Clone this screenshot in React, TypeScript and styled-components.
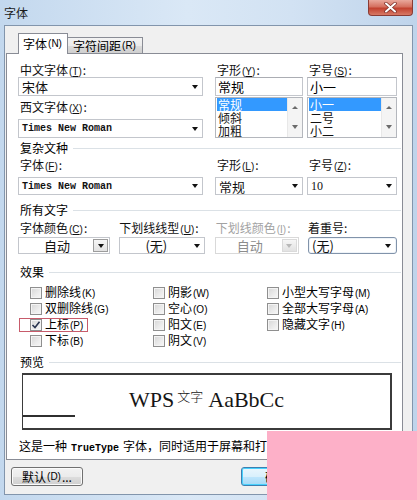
import React from "react";
import styled, { createGlobalStyle, css } from "styled-components";

const GlobalStyle = createGlobalStyle`
  html, body {
    margin: 0;
    padding: 0;
    background: #ffffff;
  }
  body {
    font-family: "Noto Sans CJK SC", "Liberation Sans", sans-serif;
    color: #000;
  }
`;

const Window = styled.div`
  position: relative;
  width: 417px;
  height: 500px;
  box-sizing: border-box;
  padding: 0 4px 5px 4px;
  display: flex;
  flex-direction: column;
  overflow: hidden;
  background: linear-gradient(90deg, #c3d8ee 0%, #dae8f6 45%, #d2e2f3 70%, #bfd4eb 100%);
`;

const TitleBar = styled.div`
  height: 25px;
  flex: none;
  display: flex;
  align-items: flex-start;
  justify-content: space-between;
`;

const Title = styled.span`
  font-size: 12px;
  line-height: 25px;
  color: #1a1a1a;
`;

const CloseButton = styled.div`
  width: 45px;
  height: 16px;
  box-sizing: border-box;
  border: 1px solid #8a3b34;
  border-top: none;
  border-radius: 0 0 4px 4px;
  background: linear-gradient(180deg, #e9a89c 0%, #d5705f 45%, #c2412f 55%, #d77a66 100%);
  display: flex;
  align-items: center;
  justify-content: center;
`;

const Body = styled.div`
  flex: 1;
  background: #f0f0f0;
  border: 1px solid #8295ac;
  display: flex;
  flex-direction: column;
  padding: 7px 9px 0 1px;
`;

const TabRow = styled.div`
  position: relative;
  z-index: 1;
  height: 20px;
  display: flex;
  align-items: flex-end;
  padding-left: 12px;
`;

const Tab = styled.div<{ $active?: boolean; $w: number }>`
  box-sizing: border-box;
  width: ${(p) => p.$w}px;
  font-size: 12px;
  line-height: 14px;
  display: flex;
  align-items: center;
  justify-content: center;
  border: 1px solid #898c95;
  border-bottom: none;
  white-space: nowrap;
  ${(p) =>
    p.$active
      ? css`
          height: 21px;
          margin-bottom: -1px;
          background: #ffffff;
          padding-bottom: 1px;
        `
      : css`
          height: 16px;
          border-left: none;
          background: linear-gradient(180deg, #f3f3f3 0%, #ebebeb 50%, #dddddd 51%, #cfcfcf 100%);
        `}
`;

const Panel = styled.div`
  height: 407px;
  box-sizing: border-box;
  border: 1px solid #898c95;
  background: #ffffff;
  padding: 9px 5px 0 11px;
  display: flex;
  flex-direction: column;
`;

const Row = styled.div<{ $mt?: number }>`
  display: flex;
  gap: 12px;
  margin-top: ${(p) => p.$mt ?? 0}px;
`;

const PairGrid = styled.div`
  display: grid;
  grid-template-columns: 88px 90px;
  column-gap: 4px;
`;

const Field = styled.div<{ $w?: number }>`
  display: flex;
  flex-direction: column;
  width: ${(p) => (p.$w ? `${p.$w}px` : "auto")};
`;

const FieldRow = styled.div<{ $mt?: number }>`
  display: flex;
  justify-content: space-between;
  margin-top: ${(p) => p.$mt ?? 0}px;
`;

const Label = styled.div<{ $disabled?: boolean; $mt?: number; $indent?: number }>`
  font-size: 12px;
  line-height: 14px;
  height: 14px;
  white-space: nowrap;
  margin-top: ${(p) => p.$mt ?? 0}px;
  padding-left: ${(p) => p.$indent ?? 2}px;
  color: ${(p) => (p.$disabled ? "#a2a2a2" : "#111111")};
`;

const Key = styled.span`
  font-family: "Liberation Sans", sans-serif;
  font-size: 10px;
  margin: 0 1px;
`;

const Combo = styled.div<{ $h: number; $mt?: number; $disabled?: boolean; $rounded?: boolean }>`
  box-sizing: border-box;
  height: ${(p) => p.$h}px;
  margin-top: ${(p) => p.$mt ?? 0}px;
  display: flex;
  align-items: stretch;
  background: #ffffff;
  border: 1px solid ${(p) => (p.$disabled ? "#d9d9d9" : "#c3c6cc")};
  ${(p) =>
    p.$rounded &&
    css`
      border-color: #8193aa;
      border-radius: 3px;
      box-shadow: inset 0 0 0 1px #eef3f8;
    `}
`;

const ComboText = styled.div<{ $center?: boolean; $mono?: boolean; $serif?: boolean; $disabled?: boolean }>`
  flex: 1;
  display: flex;
  align-items: center;
  justify-content: ${(p) => (p.$center ? "center" : "flex-start")};
  padding-left: 3px;
  white-space: nowrap;
  line-height: 15px;
  color: ${(p) => (p.$disabled ? "#8c8c8c" : "#111111")};
  ${(p) =>
    p.$mono
      ? css`
          font-family: "Liberation Mono", monospace;
          font-size: 10px;
          font-weight: bold;
        `
      : p.$serif
      ? css`
          font-family: "Liberation Serif", serif;
          font-size: 12px;
        `
      : css`
          font-size: 13px;
        `}
`;

const ArrowCell = styled.div<{ $boxed?: boolean; $disabled?: boolean }>`
  width: 15px;
  box-sizing: border-box;
  display: flex;
  align-items: center;
  justify-content: center;
  ${(p) =>
    p.$boxed &&
    css`
      border: 1px solid ${p.$disabled ? "#dadada" : "#9c9c9c"};
      background: linear-gradient(180deg, #f6f6f6 0%, #e2e2e2 100%);
      margin: 1px;
    `}
`;

const Arrow = styled.span<{ $up?: boolean; $color?: string; $w?: number }>`
  width: 0;
  height: 0;
  border-left: ${(p) => (p.$w ?? 7) / 2}px solid transparent;
  border-right: ${(p) => (p.$w ?? 7) / 2}px solid transparent;
  ${(p) =>
    p.$up
      ? css`
          border-bottom: 3px solid ${p.$color ?? "#111"};
        `
      : css`
          border-top: 4px solid ${p.$color ?? "#111"};
        `}
`;

const TextInput = styled.div`
  box-sizing: border-box;
  height: 19px;
  border: 1px solid #c3c6cc;
  border-top-color: #abadb3;
  font-size: 13px;
  line-height: 17px;
  padding-left: 2px;
  background: #fff;
`;

const ListBox = styled.div`
  box-sizing: border-box;
  height: 41px;
  margin-top: 1px;
  border: 1px solid #b4b7bd;
  display: flex;
  background: #ffffff;
`;

const ListItems = styled.div`
  flex: 1;
  padding: 0 0 0 1px;
  overflow: hidden;
`;

const ListItem = styled.div<{ $selected?: boolean }>`
  height: 13px;
  font-size: 12px;
  line-height: 13px;
  padding-left: 1px;
  background: ${(p) => (p.$selected ? "#3399ff" : "transparent")};
  color: ${(p) => (p.$selected ? "#ffffff" : "#111111")};
`;

const ScrollBar = styled.div`
  width: 15px;
  background: #f4f4f4;
  border-left: 1px solid #e8e8e8;
  display: flex;
  flex-direction: column;
  align-items: center;
  justify-content: space-between;
  padding: 8px 0 8px;
  box-sizing: border-box;
`;

const Heading = styled.div<{ $mt?: number }>`
  display: flex;
  align-items: center;
  gap: 5px;
  font-size: 12px;
  line-height: 14px;
  height: 14px;
  margin-top: ${(p) => p.$mt ?? 0}px;
  margin-right: -4px;
  padding-left: 2px;
  &::after {
    content: "";
    flex: 1;
    height: 1px;
    background: #dbe1e6;
  }
`;

const EffectsGrid = styled.div`
  margin-top: 6px;
  padding-left: 12px;
  display: grid;
  grid-template-columns: 123px 114px 1fr;
  grid-template-rows: repeat(4, 16px);
  grid-auto-flow: column;
`;

const CheckItem = styled.div<{ $marked?: boolean }>`
  position: relative;
  justify-self: start;
  display: flex;
  align-items: center;
  gap: 3px;
  font-size: 12px;
  line-height: 16px;
  white-space: nowrap;
  ${(p) =>
    p.$marked &&
    css`
      &::after {
        content: "";
        position: absolute;
        left: -11px;
        right: -4px;
        top: 1px;
        bottom: 1px;
        border: 1px solid #c75b6b;
      }
    `}
`;

const Box = styled.span`
  width: 12px;
  height: 12px;
  box-sizing: border-box;
  border: 1px solid #8f8f8f;
  background: linear-gradient(135deg, #d6d6d6 0%, #ececec 60%, #f7f7f7 100%);
  box-shadow: inset 0 0 0 1px #f4f4f4;
  display: flex;
  align-items: center;
  justify-content: center;
`;

const Preview = styled.div`
  margin: 4px 5px 0 4px;
  height: 57px;
  box-sizing: border-box;
  border: 1px solid #3b3b3b;
  border-top-width: 2px;
  border-right-width: 2px;
  border-bottom-width: 2px;
  background: #ffffff;
  display: flex;
  flex-direction: column;
`;

const PreviewText = styled.div`
  margin-top: 9px;
  font-family: "Liberation Serif", serif;
  font-size: 22px;
  line-height: 24px;
  text-align: center;
  color: #161616;
  white-space: nowrap;
`;

const Sup = styled.span`
  font-family: "Noto Sans CJK SC", sans-serif;
  font-size: 13px;
  font-weight: 300;
  vertical-align: 6px;
  margin: 0 5px 0 3px;
`;

const BaseLine = styled.div`
  width: 52px;
  height: 2px;
  background: #2f2f2f;
  margin-top: 3px;
`;

const Description = styled.div`
  margin-top: 9px;
  font-size: 12px;
  line-height: 14px;
  white-space: nowrap;
  padding-left: 1px;
`;

const Mono = styled.span`
  font-family: "Liberation Mono", monospace;
  font-size: 10px;
  font-weight: bold;
  margin: 0 4px;
`;

const Footer = styled.div`
  flex: 1;
  display: flex;
  align-items: center;
  gap: 8px;
  padding: 0 10px 1px 5px;
`;

const Button = styled.div<{ $primary?: boolean; $push?: boolean }>`
  width: 72px;
  height: 19px;
  box-sizing: border-box;
  border: 1px solid ${(p) => (p.$primary ? "#3c7fb1" : "#707070")};
  border-radius: 3px;
  font-size: 12px;
  line-height: 14px;
  display: flex;
  align-items: center;
  justify-content: center;
  margin-left: ${(p) => (p.$push ? "auto" : "0")};
  background: ${(p) =>
    p.$primary
      ? "linear-gradient(180deg, #eaf6fd 0%, #d9f0fc 50%, #bee6fd 51%, #a7d9f5 100%)"
      : "linear-gradient(180deg, #f2f2f2 0%, #ebebeb 50%, #dddddd 51%, #cfcfcf 100%)"};
  box-shadow: inset 0 0 0 1px ${(p) => (p.$primary ? "#48d1fd" : "#fbfbfb")};
`;

const Mask = styled.div`
  position: absolute;
  left: 267px;
  top: 431px;
  right: 0;
  bottom: 0;
  background: #fdb0c8;
`;

const Mn: React.FC<{ k: string }> = ({ k }) => (
  <Key>
    (<u>{k}</u>)
  </Key>
);

const CloseIcon = () => (
  <svg width="13" height="11" viewBox="0 0 13 11">
    <path d="M2 1.5 L11 9.5 M11 1.5 L2 9.5" stroke="#7a2d26" strokeWidth="3.4" strokeLinecap="round" />
    <path d="M2 1.5 L11 9.5 M11 1.5 L2 9.5" stroke="#ffffff" strokeWidth="2" strokeLinecap="round" />
  </svg>
);

const CheckMark = () => (
  <svg width="10" height="10" viewBox="0 0 10 10">
    <path d="M1.5 5 L4 7.5 L8.5 1.8" fill="none" stroke="#2a3550" strokeWidth="1.6" />
  </svg>
);

const Check: React.FC<{ label: string; k: string; checked?: boolean; marked?: boolean }> = ({
  label,
  k,
  checked,
  marked,
}) => (
  <CheckItem $marked={marked}>
    <Box>{checked && <CheckMark />}</Box>
    <span>
      {label}
      <Key>({k})</Key>
    </span>
  </CheckItem>
);

const effects = [
  { label: "删除线", k: "K" },
  { label: "双删除线", k: "G" },
  { label: "上标", k: "P", checked: true, marked: true },
  { label: "下标", k: "B" },
  { label: "阴影", k: "W" },
  { label: "空心", k: "O" },
  { label: "阳文", k: "E" },
  { label: "阴文", k: "V" },
  { label: "小型大写字母", k: "M" },
  { label: "全部大写字母", k: "A" },
  { label: "隐藏文字", k: "H" },
];

const Dropdown: React.FC<{ children: React.ReactNode }> = ({ children }) => (
  <>
    {children}
    <ArrowCell>
      <Arrow />
    </ArrowCell>
  </>
);

export default function App() {
  return (
    <>
      <GlobalStyle />
      <Window>
        <TitleBar>
          <Title>字体</Title>
          <CloseButton>
            <CloseIcon />
          </CloseButton>
        </TitleBar>
        <Body>
          <TabRow>
            <Tab $active $w={50}>
              字体<Key>(N)</Key>
            </Tab>
            <Tab $w={75}>
              字符间距<Key>(R)</Key>
            </Tab>
          </TabRow>
          <Panel>
            <Row>
              <Field $w={185}>
                <Label>
                  中文字体<Mn k="T" />:
                </Label>
                <Combo $h={19}>
                  <Dropdown>
                    <ComboText>宋体</ComboText>
                  </Dropdown>
                </Combo>
                <Label $mt={4}>
                  西文字体<Mn k="X" />:
                </Label>
                <Combo $h={19} $mt={5}>
                  <Dropdown>
                    <ComboText $mono>Times New Roman</ComboText>
                  </Dropdown>
                </Combo>
              </Field>
              <PairGrid>
                <Field>
                  <Label>
                    字形<Mn k="Y" />:
                  </Label>
                  <TextInput>常规</TextInput>
                  <ListBox>
                    <ListItems>
                      <ListItem $selected>常规</ListItem>
                      <ListItem>倾斜</ListItem>
                      <ListItem>加粗</ListItem>
                    </ListItems>
                    <ScrollBar>
                      <Arrow $up $w={6} $color="#6b6b6b" />
                      <Arrow $w={6} $color="#6b6b6b" />
                    </ScrollBar>
                  </ListBox>
                </Field>
                <Field>
                  <Label>
                    字号<Mn k="S" />:
                  </Label>
                  <TextInput>小一</TextInput>
                  <ListBox>
                    <ListItems>
                      <ListItem $selected>小一</ListItem>
                      <ListItem>二号</ListItem>
                      <ListItem>小二</ListItem>
                    </ListItems>
                    <ScrollBar>
                      <Arrow $up $w={6} $color="#6b6b6b" />
                      <Arrow $w={6} $color="#6b6b6b" />
                    </ScrollBar>
                  </ListBox>
                </Field>
              </PairGrid>
            </Row>

            <Heading $mt={3}>复杂文种</Heading>
            <Row $mt={3}>
              <Field $w={185}>
                <Label>
                  字体<Mn k="F" />:
                </Label>
                <Combo $h={18} $mt={5}>
                  <Dropdown>
                    <ComboText $mono>Times New Roman</ComboText>
                  </Dropdown>
                </Combo>
              </Field>
              <PairGrid>
                <Field>
                  <Label>
                    字形<Mn k="L" />:
                  </Label>
                  <Combo $h={18} $mt={5}>
                    <Dropdown>
                      <ComboText>常规</ComboText>
                    </Dropdown>
                  </Combo>
                </Field>
                <Field>
                  <Label>
                    字号<Mn k="Z" />:
                  </Label>
                  <Combo $h={18} $mt={5}>
                    <Dropdown>
                      <ComboText $serif>10</ComboText>
                    </Dropdown>
                  </Combo>
                </Field>
              </PairGrid>
            </Row>

            <Heading $mt={8}>所有文字</Heading>
            <FieldRow $mt={4}>
              <Field $w={92}>
                <Label>
                  字体颜色<Mn k="C" />:
                </Label>
                <Combo $h={17} $mt={2}>
                  <ComboText $center>自动</ComboText>
                  <ArrowCell $boxed>
                    <Arrow $w={6} />
                  </ArrowCell>
                </Combo>
              </Field>
              <Field $w={86}>
                <Label $indent={0}>
                  下划线线型<Mn k="U" />:
                </Label>
                <Combo $h={17} $mt={2}>
                  <Dropdown>
                    <ComboText $center>(无)</ComboText>
                  </Dropdown>
                </Combo>
              </Field>
              <Field $w={84}>
                <Label $disabled $indent={1}>
                  下划线颜色<Mn k="I" />:
                </Label>
                <Combo $h={17} $mt={2} $disabled>
                  <ComboText $center $disabled>
                    自动
                  </ComboText>
                  <ArrowCell $boxed $disabled>
                    <Arrow $w={6} $color="#b8b8b8" />
                  </ArrowCell>
                </Combo>
              </Field>
              <Field $w={89}>
                <Label $indent={0}>着重号:</Label>
                <Combo $h={17} $mt={2} $rounded>
                  <Dropdown>
                    <ComboText>(无)</ComboText>
                  </Dropdown>
                </Combo>
              </Field>
            </FieldRow>

            <Heading $mt={11}>效果</Heading>
            <EffectsGrid>
              {effects.map((e) => (
                <Check key={e.k} label={e.label} k={e.k} checked={e.checked} marked={e.marked} />
              ))}
            </EffectsGrid>

            <Heading $mt={6}>预览</Heading>
            <Preview>
              <PreviewText>
                WPS<Sup>文字</Sup>AaBbCc
              </PreviewText>
              <BaseLine />
            </Preview>
            <Description>
              这是一种<Mono>TrueType</Mono>字体，同时适用于屏幕和打印机。
            </Description>
          </Panel>
          <Footer>
            <Button>
              默认<Key>(D)</Key>...
            </Button>
            <Button $primary $push>
              确定
            </Button>
            <Button>取消</Button>
          </Footer>
        </Body>
        <Mask />
      </Window>
    </>
  );
}
